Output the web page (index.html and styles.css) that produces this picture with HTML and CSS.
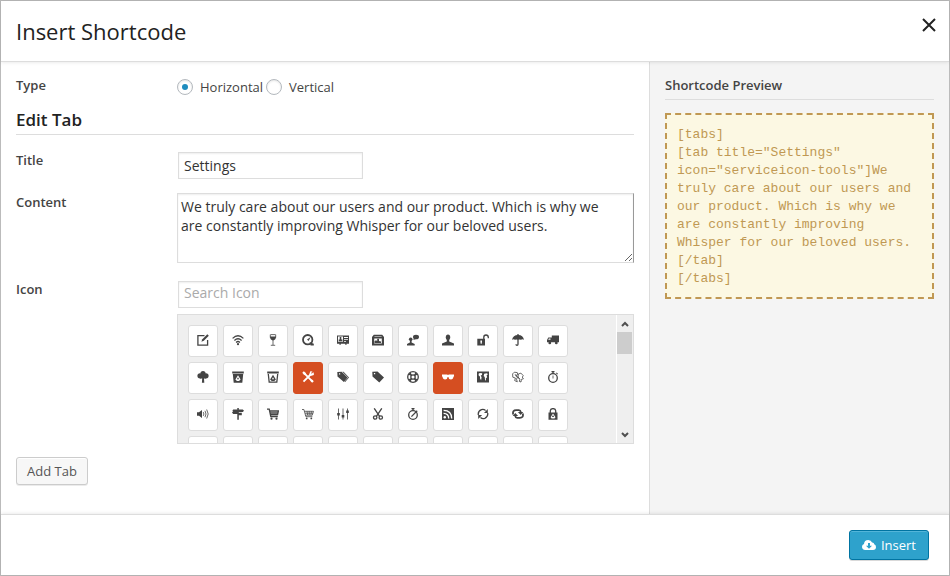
FILE: index.html
```html
<!DOCTYPE html>
<html lang="en">
<head>
<meta charset="utf-8">
<title>Insert Shortcode</title>
<link rel="stylesheet" href="styles.css">
</head>
<body>
<div class="modal">
  <header class="modal-header">
    <h1>Insert Shortcode</h1>
    <button type="button" class="close" aria-label="Close"><svg viewBox="0 0 14 14"><path d="M1 1l12 12M13 1L1 13"/></svg></button>
  </header>

  <div class="modal-body">
    <main class="settings">
      <div class="row type-row">
        <span class="label" id="type-label">Type</span>
        <div class="radios" role="radiogroup" aria-labelledby="type-label">
          <label><input type="radio" name="type" checked>Horizontal</label>
          <label><input type="radio" name="type">Vertical</label>
        </div>
      </div>
      <h2>Edit Tab</h2>
      <div class="row">
        <label class="label" for="title">Title</label>
        <div><input class="text" id="title" type="text" value="Settings"></div>
      </div>
      <div class="row">
        <label class="label" for="content">Content</label>
        <div><textarea id="content">We truly care about our users and our product. Which is why we are constantly improving Whisper for our beloved users.</textarea></div>
      </div>
      <div class="row">
        <label class="label" for="icon">Icon</label>
        <div>
          <input class="text search" id="icon" type="text" placeholder="Search Icon">
          <div class="picker">
            <div class="icons">
              <button type="button" aria-label="Edit"><svg viewBox="0 0 12 12"><path class="l" d="M7.5 1.6H.9v9.5h9.7V6"/><path d="M10.3.3l1.5 1.4-5 5-2.4 1 .9-2.5z"/></svg></button>
              <button type="button" aria-label="Wifi"><svg viewBox="0 0 12 12"><path class="l" d="M.6 4.400Q6-.8 11.400 4.400M2.400 6.500q3.600-3.400 7.200 0M4.100 8.400q1.900-1.700 3.800 0"/><circle cx="6" cy="10.200" r="1.100"/></svg></button>
              <button type="button" aria-label="Wine"><svg viewBox="0 0 12 12"><path class="t" d="M3.500.6h5M3.300.6v3M8.700.6v3M6 6v5M3.800 11.300h4.400"/><path d="M3 2.500h6q0 3.600-3 3.900-3-.3-3-3.900z"/></svg></button>
              <button type="button" aria-label="Gauge"><svg viewBox="0 0 12 12"><circle class="w" cx="5.700" cy="5.700" r="4.700"/><path d="M8.700 3L6.600 7 5 5.600zM7.600 8l4.200 1.800v1.700H8.600z"/></svg></button>
              <button type="button" aria-label="ID card"><svg viewBox="0 0 12 12"><path fill-rule="evenodd" d="M0 1.500h12v8.300H9.600v1H8.200v-1H3.800v1H2.400v-1H0zM1 2.500v5.200h5V2.500zM7 3v1h4V3zM7 5v.7h4V5zM7 7v.7h2V7z"/><path d="M2.700 3.100h1.600v2.400h1.100v1.800H1.700V5.500h1z"/></svg></button>
              <button type="button" aria-label="Gallery"><svg viewBox="0 0 12 12"><path fill-rule="evenodd" d="M1.800.8h8.400L12 3v8.500H0V3zM2.200 4.500v5h7.600v-5zM2.400 2.400v.6h7.200v-.6z"/><path d="M2.500 9V7.200l1.500-1 1.200.8V4.800h1.800V7l2 .6V9z"/></svg></button>
              <button type="button" aria-label="Talk"><svg viewBox="0 0 12 12"><circle cx="3.700" cy="5.200" r="1.800"/><path d="M2.900 6h1.700v2.400L7.700 10v1.600H0V10l2.900-1.600z"/><ellipse cx="9" cy="3" rx="3" ry="2.300"/><path d="M7 4l-.7 2L9 5z"/></svg></button>
              <button type="button" aria-label="User"><svg viewBox="0 0 12 12"><ellipse cx="6" cy="3.200" rx="2.200" ry="2.800"/><path d="M4.800 5h2.400v2.600L12 9.400v2H0v-2l4.800-1.800z"/></svg></button>
              <button type="button" aria-label="Unlocked"><svg viewBox="0 0 12 12"><path fill-rule="evenodd" d="M.3 4.800H8v6.700H.3zM3.400 6.500v1.300l.3 2h1l.3-2V6.500z"/><path class="l" d="M6.800 5V3.200q0-2.200 2.200-2.200t2.300 2.200v1"/></svg></button>
              <button type="button" aria-label="Umbrella"><svg viewBox="0 0 12 12"><path d="M0 5.800Q1 1.200 6 1t6 4.800q-1.600-1-3 0-1.500-.8-3 0-1.500-.8-3 0-1.400-1-3 0z"/><path class="l" d="M6 0v10.200q0 1.100-1 1.100t-1-1.100"/></svg></button>
              <button type="button" aria-label="Truck"><svg viewBox="0 0 12 12"><path fill-rule="evenodd" d="M4.800 1.500H12v6.800H0V6l1.300-2.500h3.500zM1.200 5.800h2.300V4.500H1.900z"/><circle cx="2.800" cy="8.900" r="1.400"/><circle cx="9.300" cy="8.900" r="1.400"/></svg></button>

              <button type="button" aria-label="Tree"><svg viewBox="0 0 12 12"><circle cx="3" cy="4.800" r="2.600"/><circle cx="6" cy="2.700" r="2.600"/><circle cx="9" cy="4.800" r="2.600"/><path d="M3 4h6v3.400H7l.3 4.300H4.900L5.200 7.400H3z"/></svg></button>
              <button type="button" aria-label="Recycle bin full"><svg viewBox="0 0 12 12"><path fill-rule="evenodd" d="M.2.600h11.600v1.800H.2zM.8 2.900h10.400l-.9 8.800H1.700zM6 4.300L3.400 8.500 5 10.100h2l1.600-1.600zM6 6.200l1.100 2H4.900z"/></svg></button>
              <button type="button" aria-label="Recycle bin"><svg viewBox="0 0 12 12"><path fill-rule="evenodd" d="M.2.600h11.600v1.800H.2zM6 3.800L3.100 8.500 4.700 10.100h2.600l1.600-1.600zM6 6.200l1.100 2H4.900z"/><path class="l" d="M1.300 3l.9 8.200h7.600l.9-8.200"/></svg></button>
              <button type="button" class="on" aria-label="Tools" aria-pressed="true"><svg viewBox="0 0 12 12"><path class="w" d="M2.600 2.600l8 8M8.600 3.500L1.500 10.700"/><path d="M.3 1.800L1.800.3l2.400 2L2.300 4.200zM8.300.2L7.200 3.400l1.500 1.500 3.100-1q.3-2.200-.7-2.600L9.800 2.700l-.7-.7L10.500.6zM8.200 9.800l1.600-1.600 2 2-1.600 1.600z"/></svg></button>
              <button type="button" aria-label="Tags"><svg viewBox="0 0 12 12"><path fill-rule="evenodd" d="M.3 1.100l4.400-.3 5.800 5.800-3.600 4.400L.5 5.600zM2 2.300v1.200h1.200V2.300z"/><path d="M5.400.8h1.200L12 6.400l-3.800 4.600-.7-.4 3.500-4z"/></svg></button>
              <button type="button" aria-label="Tag"><svg viewBox="0 0 12 12"><path fill-rule="evenodd" d="M.3.700l5.200-.2L12 6.600l-4.700 5L.5 5.600zM1.900 2v1.300h1.300V2z"/></svg></button>
              <button type="button" aria-label="Help"><svg viewBox="0 0 12 12"><circle class="l" cx="6" cy="6" r="5.300"/><circle class="l" cx="6" cy="6" r="2.200"/><path d="M1.400 3.500L3.500 1.400l1.600 2.700-1 1zM8.500 1.400l2.100 2.100-2.700 1.600-1-1zM10.600 8.500l-2.100 2.100-1.600-2.700 1-1zM3.500 10.600L1.400 8.500l2.700-1.600 1 1z"/></svg></button>
              <button type="button" class="on" aria-label="Sunglasses"><svg viewBox="0 0 12 12"><path d="M0 3.500h5l1 .6 1-.6h5v2l-.6.300q-.2 2.700-2.500 2.700-2.200 0-2.500-2.600h-.8q-.3 2.600-2.500 2.600Q.8 8.500.6 5.800L0 5.500z"/></svg></button>
              <button type="button" aria-label="World map"><svg viewBox="0 0 12 12"><path fill-rule="evenodd" d="M0 .5h12v11H0zM1.600 2.800l1.200-.8 2.400.3-.2 1.600-1.300.7.9 1.600-.5 3-1.200-2 .2-1.500-1.400-1.200zM7.200 2.700l2.900-.5.7 1.300-1.200.8.5 1.900-1.300 1.200.2 2-.9-.2L7.700 6l-1-1z"/></svg></button>
              <button type="button" aria-label="World outline"><svg viewBox="0 0 12 12"><path class="t" d="M.6 2.900l1.700-1.700 3 .4.500 2-2.200 1 1.900 1.500-1 2.100.8 2.600-2.600-1.200.7-2.600-2.600-.8zM6.300 3l2.600-.9 2.500 2.700-1.200 1.200 1.200 1.800-2 .6-.4 2.600-1.700-.6.5-2.200-1.700-2.200zM3 3.200l4.500 4.900"/></svg></button>
              <button type="button" aria-label="Stopwatch"><svg viewBox="0 0 12 12"><circle class="l" cx="6" cy="7" r="4.300"/><path d="M4.500 0h3v1.300h-.8v1.500H5.300V1.300h-.8zM9.600 1.500l1.400 1.300-.7.800L9 2.300z"/><path class="t" d="M6 4.500v3"/></svg></button>

              <button type="button" aria-label="Volume"><svg viewBox="0 0 12 12"><path d="M0 4.300h2L5 2v8L2 7.700H0z"/><path class="t" d="M6.300 4.100q1.200 1.900 0 3.800M8 2.800q2 3.200 0 6.400M9.700 1.500q3 4.500 0 9"/></svg></button>
              <button type="button" aria-label="Signpost"><svg viewBox="0 0 12 12"><path d="M5.300 0h1.500v1.400h4l1.200 1.400-1.200 1.300h-4v.7h3v2.400h-3v4.600H5.300V6.100H1.200L0 4.500l1.200-1.400-.9-.3.9-1.200h4.100z"/></svg></button>
              <button type="button" aria-label="Cart"><svg viewBox="0 0 12 12"><path class="l" d="M0 1.200h2.200l1.600 7.300h7M2.600 3h8.800l-.8 3.500H3.400M3 4.800h8"/><circle cx="4.500" cy="10.700" r="1.100"/><circle cx="9.500" cy="10.700" r="1.100"/></svg></button>
              <button type="button" aria-label="Full cart"><svg viewBox="0 0 12 12"><path class="t" d="M0 1.500h1.900l2 7.200h6.500M2.500 3.300h9l-1.200 3.900H3.500M5 3.300l.6 3.700M7.200 3.300V7M9.400 3.300L8.900 7M3 5.200h8"/><circle cx="4.700" cy="10.400" r=".9"/><circle cx="9.300" cy="10.400" r=".9"/></svg></button>
              <button type="button" aria-label="Sliders"><svg viewBox="0 0 12 12"><path class="t" d="M1.500.5v11M6 .5v11M10.500.5v11"/><path d="M.2 5h2.600v2.600H.2zM4.700 7h2.600v2.600H4.700zM9.200 2.500h2.600v2.600H9.200z"/></svg></button>
              <button type="button" aria-label="Scissors"><svg viewBox="0 0 12 12"><path class="l" d="M2.200.3l5.400 8M9.800.3l-5.400 8"/><circle class="l" cx="3.200" cy="9.500" r="1.700"/><circle class="l" cx="8.800" cy="9.500" r="1.700"/></svg></button>
              <button type="button" aria-label="Timer"><svg viewBox="0 0 12 12"><circle class="l" cx="6" cy="7" r="4.300"/><path d="M4.500 0h3v1.300h-.8v1.500H5.300V1.300h-.8z"/><path class="l" d="M4.400 8.600l5.800-5.800"/></svg></button>
              <button type="button" aria-label="RSS"><svg viewBox="0 0 12 12"><path d="M0 0h12v12H0z"/><g class="cut"><circle cx="2.800" cy="9.200" r="1.200"/><path class="l" d="M1.600 5.300q5 .2 5.100 5.100M1.600 2.300q8 .1 8.100 8.100"/></g></svg></button>
              <button type="button" aria-label="Sync"><svg viewBox="0 0 12 12"><path class="l" d="M1.300 7Q.8 3 4.500 1.600 6.700 1 8.600 2.400M10.700 5q.6 3.800-2.900 5.300-2.500.8-4.300-.8"/><path d="M10.800 1v4H7zM1.200 11V7h3.900z"/></svg></button>
              <button type="button" aria-label="Repeat"><svg viewBox="0 0 12 12"><path class="w" d="M1.200 6.500Q.2 2.200 4.200 2.200h2.600q1.700.1 2 2M10.800 5.500q1 4.300-3 4.300H5.200q-1.700-.1-2-2"/><path d="M11.300 3.900L8.700 7 5.900 3.900zM.7 8.100L3.300 5l2.800 3.100z"/></svg></button>
              <button type="button" aria-label="Secure"><svg viewBox="0 0 12 12"><path class="l" d="M3.300 5V2.800Q3.500.6 6 .6t2.700 2.200V5"/><path fill-rule="evenodd" d="M1.500 4.500h9v7.300h-9zM6 5.500L3.600 9.300l1 1.300h2.900l1-1.300zM6 7l1.100 2H4.900z"/></svg></button>

              <button type="button" aria-label="Icon 34"></button>
              <button type="button" aria-label="Icon 35"></button>
              <button type="button" aria-label="Icon 36"></button>
              <button type="button" aria-label="Icon 37"></button>
              <button type="button" aria-label="Icon 38"></button>
              <button type="button" aria-label="Icon 39"></button>
              <button type="button" aria-label="Icon 40"></button>
              <button type="button" aria-label="Icon 41"></button>
              <button type="button" aria-label="Icon 42"></button>
              <button type="button" aria-label="Icon 43"></button>
              <button type="button" aria-label="Icon 44"></button>
            </div>
            <div class="scrollbar" aria-hidden="true">
              <svg viewBox="0 0 8 6"><path d="M1 5l3-3 3 3"/></svg>
              <div class="thumb"></div>
              <svg viewBox="0 0 8 6"><path d="M1 1l3 3 3-3"/></svg>
            </div>
          </div>
        </div>
      </div>
      <button type="button" class="btn">Add Tab</button>
    </main>

    <aside class="preview">
      <h3>Shortcode Preview</h3>
      <code>[tabs]<br>[tab title="Settings" icon="serviceicon-tools"]We truly care about our users and our product. Which is why we are constantly improving Whisper for our beloved users.<br>[/tab]<br>[/tabs]</code>
    </aside>
  </div>

  <footer class="modal-footer">
    <button type="button" class="btn primary"><svg viewBox="0 0 14 12"><path fill-rule="evenodd" d="M3.300 11Q0 10.900 0 7.800q0-2.200 2-2.900Q2.300 1 6.200 1q3 0 3.900 2.500 2-.1 2.100 1.800Q14 6 14 8q0 2.900-3 3zM6 4v2.700H4l3 3.100 3-3.100H8V4z"/></svg>Insert</button>
  </footer>
</div>
</body>
</html>
```
FILE: styles.css
```css
* {
  box-sizing: border-box;
}

body {
  margin: 0;
  font: 13px/18px "Open Sans", sans-serif;
  color: #444;
}

h1, h2, h3 {
  margin: 0;
}

button, input, textarea {
  font: inherit;
  color: inherit;
  margin: 0;
}

.modal {
  display: flex;
  flex-direction: column;
  min-height: 100vh;
  background: #fff;
  border: 1px solid #bbb;
}

.modal-header {
  display: flex;
  justify-content: space-between;
  align-items: flex-start;
  padding: 15px 13px 15px 15px;
  border-bottom: 1px solid #ddd;
  box-shadow: 0 0 4px rgba(0, 0, 0, .12);
  position: relative;
}

h1 {
  font-size: 22px;
  line-height: 30px;
  font-weight: 400;
  color: #222;
}

.close {
  display: block;
  padding: 2px 0 0;
  border: 0;
  background: none;
}

.close svg {
  display: block;
  width: 14px;
  height: 14px;
  fill: none;
  stroke: #222;
  stroke-width: 2;
}

.modal-body {
  display: flex;
  flex: 1;
}

.settings {
  flex: 1;
  min-width: 0;
  padding: 14px 15px;
}

.row {
  display: grid;
  grid-template-columns: 161px minmax(0, 1fr);
  margin-bottom: 13px;
}

.type-row {
  margin-bottom: 10px;
}

.label {
  font-weight: 600;
}

.radios {
  display: flex;
  gap: 3px;
  padding-top: 2px;
}

.radios label {
  display: flex;
  align-items: center;
  gap: 7px;
}

.radios input {
  appearance: none;
  display: grid;
  place-content: center;
  width: 16px;
  height: 16px;
  border: 1px solid #b4b9be;
  border-radius: 50%;
  box-shadow: inset 0 1px 2px rgba(0, 0, 0, .1);
}

.radios input:checked::before {
  content: "";
  width: 6px;
  height: 6px;
  border-radius: 50%;
  background: #1e8cbe;
}

h2 {
  margin-bottom: 16px;
  border-bottom: 1px solid #ddd;
  font-size: 17px;
  line-height: 28px;
  font-weight: 600;
  color: #222;
}

.text, textarea {
  display: block;
  border: 1px solid #ddd;
  border-radius: 0;
  background: #fff;
  box-shadow: inset 0 1px 2px rgba(0, 0, 0, .07);
  font-size: 14px;
  line-height: 19px;
  color: #333;
  outline: 0;
}

.text {
  width: 185px;
  height: 27px;
  margin: 1px;
  padding: 3px 5px;
}

.search {
  padding: 1px 5px 5px;
}

.text::placeholder {
  color: #aaa;
}

textarea {
  width: 100%;
  height: 70px;
  margin-bottom: 4px;
  padding: 3px 18px 3px 3px;
  resize: vertical;
  border-right-color: #999;
}

.picker {
  display: flex;
  height: 130px;
  margin-top: 6px;
  border: 1px solid #ddd;
  background: #efefef;
  overflow: hidden;
}

.icons {
  flex: 1;
  display: flex;
  flex-wrap: wrap;
  align-content: flex-start;
  gap: 5px;
  padding: 10px 20px 0 10px;
}

.icons button {
  display: flex;
  justify-content: center;
  width: 30px;
  height: 32px;
  padding: 8px 0 0;
  border: 1px solid #ddd;
  border-radius: 3px;
  background: #fff;
}

.icons button.on {
  background: #d54e21;
  border-color: #d54e21;
  color: #fff;
}

.icons svg {
  width: 12px;
  height: 12px;
  fill: currentColor;
}

.icons .l, .icons .t, .icons .w {
  fill: none;
  stroke: currentColor;
  stroke-width: 1.3;
}

.icons .t {
  stroke-width: .8;
}

.icons .w {
  stroke-width: 1.8;
}

.icons .cut {
  color: #fff;
  fill: #fff;
}

.scrollbar {
  display: flex;
  flex-direction: column;
  align-items: center;
  width: 17px;
  padding: 6px 1px 5px 0;
  border-left: 1px solid #fff;
}

.scrollbar svg {
  width: 8px;
  height: 6px;
  fill: none;
  stroke: #505050;
  stroke-width: 2;
}

.thumb {
  width: 100%;
  height: 22px;
  margin: 5px 0 auto;
  background: #cdcdcd;
}

.btn {
  padding: 4px 10px;
  border: 1px solid #ccc;
  border-radius: 3px;
  background: #f7f7f7;
  box-shadow: inset 0 1px 0 #fff, 0 1px 0 rgba(0, 0, 0, .08);
  color: #555;
}

.primary {
  display: flex;
  align-items: center;
  gap: 5px;
  padding: 5px 12px;
  background: #2ea2cc;
  border-color: #0074a2;
  box-shadow: inset 0 1px 0 rgba(120, 200, 230, .5), 0 1px 0 rgba(0, 0, 0, .15);
  color: #fff;
}

.primary svg {
  width: 14px;
  height: 12px;
  fill: #fff;
}

.preview {
  width: 300px;
  padding: 14px 15px;
  border-left: 1px solid #ddd;
  background: #f4f4f4;
}

h3 {
  margin-bottom: 13px;
  padding-bottom: 5px;
  border-bottom: 1px solid #ddd;
  font-size: 13px;
  line-height: 18px;
  font-weight: 600;
}

.preview code {
  display: block;
  padding: 11px 10px 9px;
  border: 2px dashed #c09853;
  background: #fcf8e3;
  font: 13px/18px "Liberation Mono", monospace;
  color: #c09853;
}

.modal-footer {
  display: flex;
  justify-content: flex-end;
  padding: 15px 20px;
  border-top: 1px solid #ddd;
  box-shadow: 0 0 4px rgba(0, 0, 0, .12);
  position: relative;
}
```
